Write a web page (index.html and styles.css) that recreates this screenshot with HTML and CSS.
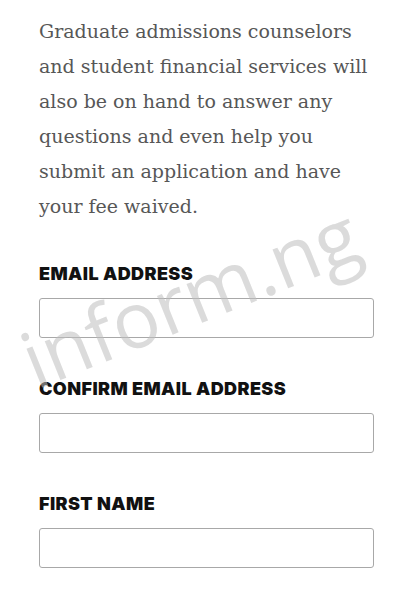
FILE: index.html
```html
<!DOCTYPE html>
<html lang="en">
<head>
<meta charset="utf-8">
<title>Registration</title>
<link rel="stylesheet" href="styles.css">
</head>
<body>
<main class="page">
  <p class="intro">Graduate admissions counselors and student financial services will also be on hand to answer any questions and even help you submit an application and have your fee waived.</p>
  <form class="form">
    <div class="field">
      <label class="label" for="email">EMAIL ADDRESS</label>
      <input class="input" id="email" type="email">
    </div>
    <div class="field">
      <label class="label" for="confirm">CONFIRM EMAIL ADDRESS</label>
      <input class="input" id="confirm" type="email">
    </div>
    <div class="field">
      <label class="label" for="first">FIRST NAME</label>
      <input class="input" id="first" type="text">
    </div>
  </form>
  <div class="watermark">inform.ng</div>
</main>
</body>
</html>
```

FILE: styles.css
```css
html, body {
  margin: 0;
  padding: 0;
  background: #ffffff;
}
.page {
  position: relative;
  padding: 14px 39px 0 39px;
  overflow: hidden;
  height: 600px;
  box-sizing: border-box;
}
.intro {
  margin: 0;
  font-family: "DejaVu Serif", serif;
  font-size: 19px;
  line-height: 35px;
  color: #575757;
}
.form {
  display: flex;
  flex-direction: column;
  gap: 41px;
  margin-top: 40px;
}
.field {
  display: flex;
  flex-direction: column;
  gap: 14px;
}
.label {
  font-family: Inter, "Liberation Sans", sans-serif;
  font-weight: 900;
  font-size: 18px;
  line-height: 20px;
  letter-spacing: 0.4px;
  color: #111111;
}
.input {
  display: block;
  height: 40px;
  box-sizing: border-box;
  width: 100%;
  margin: 0;
  border: 1.5px solid #a8a8a8;
  border-radius: 3px;
  background: #ffffff;
}
.watermark {
  position: absolute;
  left: 36px;
  top: 321px;
  font-family: "Open Sans", sans-serif;
  font-size: 78px;
  line-height: 1;
  color: rgba(190, 190, 190, 0.55);
  transform: rotate(-22deg);
  transform-origin: 0 69px;
  pointer-events: none;
  white-space: nowrap;
}
```
